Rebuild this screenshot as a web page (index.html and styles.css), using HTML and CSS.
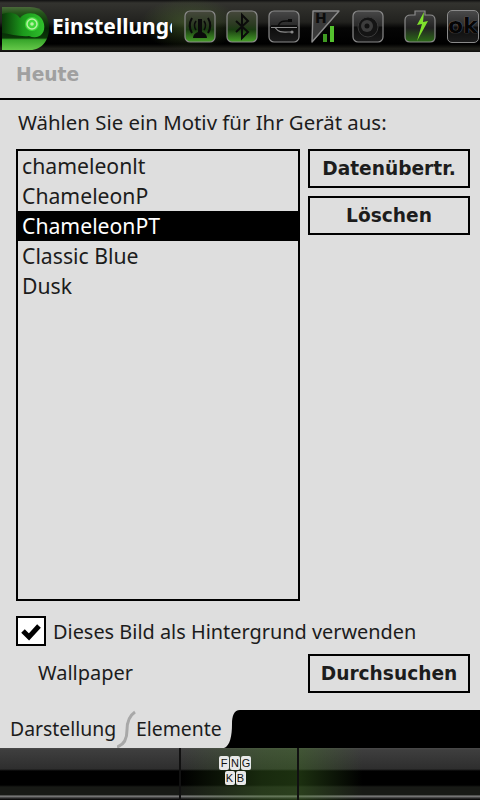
FILE: index.html
```html
<!DOCTYPE html>
<html lang="de">
<head>
    <meta charset="UTF-8">
    <meta name="viewport" content="width=device-width, initial-scale=1.0">
    <title>Einstellungen</title>
    <link rel="stylesheet" href="styles.css">
</head>
<body>

<div class="top-bar">
    <svg class="logo" width="50" height="46" viewBox="0 0 50 46">
        <defs>
            <linearGradient id="logoFill" x1="0" y1="0" x2="0" y2="1">
                <stop offset="0" stop-color="#4a6a3a"/>
                <stop offset="0.14" stop-color="#24551a"/>
                <stop offset="0.5" stop-color="#062406"/>
                <stop offset="0.72" stop-color="#0a3a08"/>
                <stop offset="0.76" stop-color="#37a52a"/>
                <stop offset="1" stop-color="#66c84a"/>
            </linearGradient>
            <linearGradient id="logoBody" x1="0" y1="0" x2="1" y2="0">
                <stop offset="0" stop-color="#0a3a08"/>
                <stop offset="0.5" stop-color="#1c9a1c"/>
                <stop offset="1" stop-color="#2fc02c"/>
            </linearGradient>
        </defs>
        <path d="M2 3 H30 C43 3 49 12 49 24 C49 36 42 46 30 46 H2 Z" fill="url(#logoFill)"/>
        <path d="M2 10 C12 7 17 10 20 14 C25 7 41 7 44 20 C46 30 38 36 29 32 C20 33 10 30 2 29 Z" fill="url(#logoBody)"/>
        <circle cx="32" cy="20" r="7" fill="#3ed83a"/>
        <circle cx="32" cy="20" r="5" fill="none" stroke="#b9f0a4" stroke-width="1.5"/>
        <circle cx="32" cy="20" r="1.8" fill="#b9f0a4"/>
    </svg>
    <div class="app-title">Einstellungen</div>
    <div class="tray">
        <svg class="tray-icon" width="32" height="33" viewBox="0 0 32 33">
            <defs>
                <linearGradient id="tileGreen" x1="0" y1="0" x2="0" y2="1">
                    <stop offset="0" stop-color="#46483c"/>
                    <stop offset="0.45" stop-color="#2a3a20"/>
                    <stop offset="0.6" stop-color="#1a3c12"/>
                    <stop offset="1" stop-color="#46a028"/>
                </linearGradient>
                <linearGradient id="tileDark" x1="0" y1="0" x2="0" y2="1">
                    <stop offset="0" stop-color="#484848"/>
                    <stop offset="0.48" stop-color="#2a2a2a"/>
                    <stop offset="0.52" stop-color="#0c0c0c"/>
                    <stop offset="1" stop-color="#1c1c1c"/>
                </linearGradient>
            </defs>
            <rect class="tile-green" x="1" y="1" width="30" height="31" rx="5"/>
            <path d="M8 8 C5 13 5 18 8 23 M24 8 C27 13 27 18 24 23" fill="none" stroke="#0b0b0b" stroke-width="2"/>
            <path d="M12 11 C10 14 10 17 12 20 M20 11 C22 14 22 17 20 20" fill="none" stroke="#0b0b0b" stroke-width="1.6"/>
            <path d="M14 9 H18 V22 C21 23 23 25 23 28 H9 C9 25 11 23 14 22 Z" fill="#0b0b0b"/>
        </svg>
        <svg class="tray-icon" width="32" height="33" viewBox="0 0 32 33">
            <rect class="tile-green" x="1" y="1" width="30" height="31" rx="5"/>
            <path d="M10 11 L22 22 L16 28 V5 L22 11 L10 22" fill="none" stroke="#0b0b0b" stroke-width="2"/>
        </svg>
        <svg class="tray-icon" width="32" height="33" viewBox="0 0 32 33">
            <rect class="tile-dark" x="1" y="1" width="30" height="31" rx="5"/>
            <path d="M3 16 H29 M10 16 C12 11 15 11 18 11 H21" fill="none" stroke="#0a0a0a" stroke-width="1.5"/>
            <path d="M3 17.5 H29 M7 17.5 C11 23 15 22 20 22 H24" fill="none" stroke="#8a8a8a" stroke-width="1.2"/>
            <rect x="20" y="9" width="4" height="3" fill="#0a0a0a"/>
            <circle cx="24" cy="22" r="1.6" fill="#8a8a8a"/>
        </svg>
        <div class="tray-h">
            <svg width="32" height="33" viewBox="0 0 32 33">
                <path d="M3 1 H29 L2 32 Z" fill="#3a3a3a" stroke="#8a8a8a" stroke-width="1.4" stroke-linejoin="round"/>
                <rect x="13" y="24" width="4" height="8" fill="#3f9a22"/>
                <rect x="20" y="16" width="4" height="16" fill="#54c22e"/>
            </svg>
            <span class="h-letter">H</span>
        </div>
        <svg class="tray-icon tray-speaker" width="32" height="33" viewBox="0 0 32 33">
            <rect class="tile-dark" x="1" y="1" width="30" height="31" rx="5"/>
            <circle cx="16" cy="17" r="10" fill="#141414" stroke="#3a3a3a"/>
            <circle cx="15" cy="16" r="6" fill="#3c3c3c"/>
            <circle cx="15" cy="16" r="2.5" fill="#111"/>
        </svg>
        <svg class="tray-icon tray-battery" width="32" height="33" viewBox="0 0 32 33">
            <defs>
                <linearGradient id="battFill" x1="0" y1="0" x2="0" y2="1">
                    <stop offset="0" stop-color="#484848"/>
                    <stop offset="0.55" stop-color="#222"/>
                    <stop offset="1" stop-color="#2c6b18"/>
                </linearGradient>
            </defs>
            <path d="M7 5 H11 V1 H21 V5 H26 Q31 5 31 10 V27 Q31 32 26 32 H6 Q1 32 1 27 V10 Q1 5 7 5 Z" fill="url(#battFill)" stroke="#8a8a8a" stroke-width="1.2"/>
            <path d="M20 2 L13 15 L18 14 L13 31 L24 11 L19 12 Z" fill="#7fe02c"/>
        </svg>
        <div class="ok-tile">ok</div>
    </div>
</div>

<div class="page">
    <div class="page-heading">Heute</div>
    <div class="content">
        <p class="prompt">Wählen Sie ein Motiv für Ihr Gerät aus:</p>
        <div class="picker">
            <ul class="theme-list">
                <li>chameleonlt</li>
                <li>ChameleonP</li>
                <li class="selected">ChameleonPT</li>
                <li>Classic Blue</li>
                <li>Dusk</li>
            </ul>
            <div class="side-buttons">
                <button class="btn">Datenübertr.</button>
                <button class="btn">Löschen</button>
            </div>
        </div>
        <div class="check-row">
            <span class="checkbox">
                <svg width="26" height="26" viewBox="0 0 26 26"><path d="M5 13 L11 19 L21 8" fill="none" stroke="#000" stroke-width="5"/></svg>
            </span>
            <span class="check-label">Dieses Bild als Hintergrund verwenden</span>
        </div>
        <div class="wallpaper-row">
            <span class="wallpaper-name">Wallpaper</span>
            <button class="btn">Durchsuchen</button>
        </div>
    </div>
</div>

<div class="tab-bar">
    <div class="tab">Darstellung</div>
    <svg class="tab-sep" width="20" height="38" viewBox="0 0 20 38">
        <path d="M18 2 C12 6 10 12 10 20 C10 28 7 35 0 37" fill="none" stroke="#a8a8a8" stroke-width="3"/>
    </svg>
    <div class="tab tab-active">Elemente</div>
    <svg class="tab-corner" width="16" height="38" viewBox="0 0 16 38">
        <path d="M0 0 H16 C10 0 8 6 8 14 C8 26 6 36 0 38 Z" fill="#dedede"/>
    </svg>
</div>

<div class="menu-bar">
    <div class="menu-cell"></div>
    <div class="menu-cell menu-mid">
        <div class="keys">
            <div class="key-row"><span class="key">F</span><span class="key">N</span><span class="key">G</span></div>
            <div class="key-row"><span class="key">K</span><span class="key">B</span></div>
        </div>
    </div>
    <div class="menu-cell menu-right"></div>
</div>

</body>
</html>
```

FILE: styles.css
```css
* {
    box-sizing: border-box;
}
body {
    margin: 0;
    width: 480px;
    height: 800px;
    overflow: hidden;
    display: flex;
    flex-direction: column;
    font-family: "Noto Sans", sans-serif;
    font-size: 20px;
    color: #1c1c1c;
    background: #dedede;
}
.top-bar {
    height: 52px;
    display: flex;
    align-items: center;
    background:
        radial-gradient(ellipse 50px 26px at 190px 24px, rgba(90, 130, 50, 0.45), transparent),
        linear-gradient(#111 0, #33332f 3px, #22221f 22px, #050505 28px, #000 44px, #22221c 49px, #0c0c0c 52px);
}
.logo {
    flex: none;
    margin-top: 2px;
}
.app-title {
    width: 120px;
    margin-left: 2px;
    overflow: hidden;
    white-space: nowrap;
    font-weight: bold;
    font-size: 21px;
    color: #fff;
}
.tray {
    display: flex;
    align-items: center;
    gap: 10px;
    margin-left: 12px;
    margin-top: 1px;
}
.tray-icon {
    flex: none;
}
.tile-green {
    fill: url(#tileGreen);
    stroke: #8a8a8a;
    stroke-width: 1.2;
}
.tile-dark {
    fill: url(#tileDark);
    stroke: #8a8a8a;
    stroke-width: 1.2;
}
.tray-h {
    position: relative;
    width: 32px;
    height: 33px;
}
.h-letter {
    position: absolute;
    top: 0;
    left: 5px;
    font-family: "DejaVu Sans", sans-serif;
    font-weight: bold;
    font-size: 14px;
    color: #0c0c0c;
}
.tray-speaker {
    margin-right: 10px;
}
.tray-battery {
    margin-right: 1px;
}
.ok-tile {
    width: 32px;
    height: 33px;
    border: 1px solid #8a8a8a;
    border-radius: 5px;
    background: linear-gradient(#4a4a4a, #2a2a2a 48%, #0c0c0c 52%, #1c1c1c);
    font-family: "DejaVu Sans", sans-serif;
    font-weight: bold;
    font-size: 22px;
    line-height: 30px;
    color: #050505;
    text-shadow: 0 0 1px #9a9a9a;
    overflow: hidden;
}
.page {
    flex: 1;
    min-height: 0;
}
.page-heading {
    height: 48px;
    padding: 12px 0 0 16px;
    border-bottom: 2px solid #000;
    font-family: "DejaVu Sans", sans-serif;
    font-weight: bold;
    font-size: 18.7px;
    color: #a0a0a0;
}
.content {
    padding: 0 10px 0 16px;
}
.prompt {
    height: 25px;
    margin: 10px 0 14px 2px;
    line-height: 25px;
    font-size: 20.4px;
}
.picker {
    display: flex;
    gap: 8px;
}
.theme-list {
    width: 284px;
    height: 452px;
    margin: 0;
    padding: 0;
    list-style: none;
    border: 2px solid #000;
}
.theme-list li {
    height: 30px;
    line-height: 29px;
    padding-left: 4px;
    font-size: 21.2px;
}
.theme-list .selected {
    background: #000;
    color: #fff;
}
.side-buttons {
    display: flex;
    flex-direction: column;
    gap: 8px;
}
.btn {
    width: 162px;
    height: 39px;
    padding: 0;
    border: 2px solid #000;
    background: #dedede;
    font-family: "DejaVu Sans", sans-serif;
    font-weight: bold;
    font-size: 18.6px;
    color: #1c1c1c;
}
.check-row {
    display: flex;
    align-items: center;
    gap: 7px;
    margin-top: 15px;
}
.check-label {
    font-size: 19.9px;
}
.checkbox {
    width: 30px;
    height: 30px;
    display: flex;
    align-items: center;
    justify-content: center;
    border: 2px solid #000;
    background: #fff;
}
.wallpaper-row {
    display: flex;
    align-items: center;
    justify-content: space-between;
    margin-top: 8px;
    padding-left: 22px;
}
.wallpaper-name {
    margin-bottom: 2px;
}
.tab-bar {
    height: 38px;
    display: flex;
    background: #000;
    font-size: 19.4px;
}
.tab {
    width: 117px;
    padding: 5px 0 0 10px;
    background: #dedede;
}
.tab-sep {
    flex: none;
    background: #dedede;
}
.tab-active {
    width: 88px;
    padding-left: 0;
    margin-left: -1px;
}
.tab-corner {
    flex: none;
}
.menu-bar {
    height: 52px;
    display: grid;
    grid-template-columns: 181px 118px 181px;
    background: linear-gradient(#4a4a4a 0, #3e3e3e 2px, #2e2e2e 21px, #000 23px, #000 37px, #181a16 39px, #181a16 47px, #8a8a8a 48px, #333 50px, #000 52px);
}
.menu-cell {
    border-right: 2px solid #111;
}
.menu-mid {
    background: linear-gradient(90deg, transparent, rgba(70, 120, 40, 0.35) 70%, rgba(70, 120, 40, 0.4));
}
.menu-right {
    border-right: none;
    background: linear-gradient(90deg, rgba(70, 120, 40, 0.4), transparent 35%);
}
.keys {
    display: flex;
    flex-direction: column;
    align-items: center;
    gap: 1px;
    padding-top: 8px;
    margin-right: 8px;
}
.key-row {
    display: flex;
    gap: 1px;
}
.key {
    width: 10px;
    height: 14px;
    border-radius: 2px;
    background: #e8e8e8;
    font-family: "Liberation Sans", sans-serif;
    font-size: 11px;
    line-height: 14px;
    text-align: center;
    color: #111;
}
```
